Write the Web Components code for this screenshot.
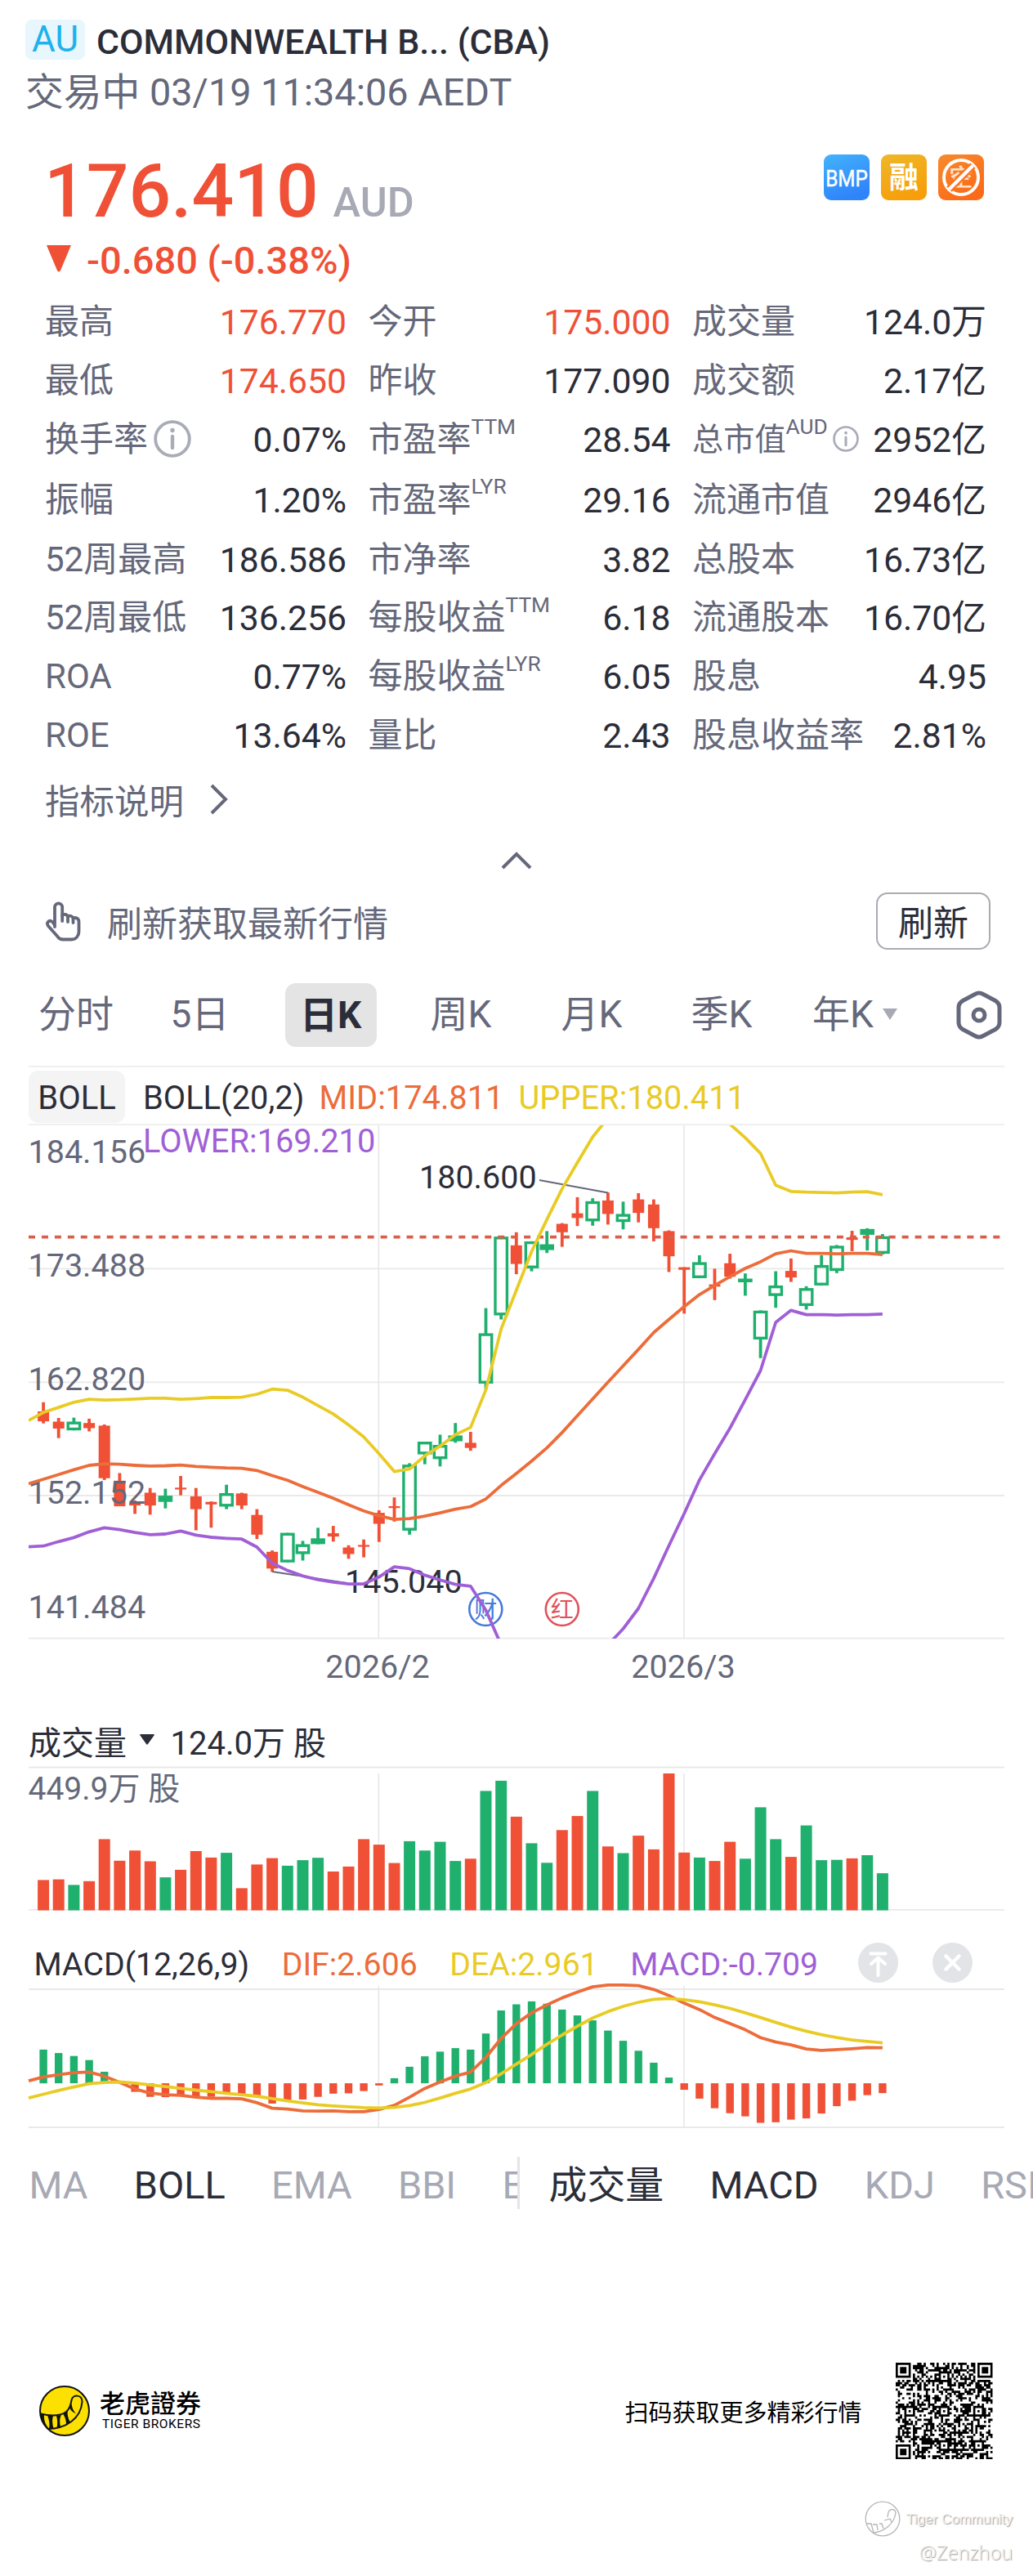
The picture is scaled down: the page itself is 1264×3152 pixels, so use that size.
<!DOCTYPE html>
<html lang="zh-CN">
<head>
<meta charset="utf-8">
<title>COMMONWEALTH B... (CBA)</title>
<style>
  html, body {
    margin: 0;
    background: #fff;
  }
  body {
    width: 1264px;
    height: 3152px;
    overflow: hidden;
    font-family: Roboto, "Noto Sans CJK SC", sans-serif;
    --ink: #2b2d38;
    --muted: #65687a;
    --faint: #a7a9b4;
    --line: #f0f0f1;
    --red: #ef5036;
    --green: #20b06e;
    --orange: #ec6c3a;
    --yellow: #e9cb25;
    --purple: #a05fd6;
    color: var(--ink);
  }
</style>
</head>
<body>
<stock-page></stock-page>

<script>
// Shared base: every element renders its own html() once into an open root
class BaseElement extends HTMLElement {
  constructor() {
    super();
    this.root = this.attachShadow({ mode: "open" });
  }
  connectedCallback() {
    const template = document.createElement("template");
    template.innerHTML = this.html();
    this.root.appendChild(template.content.cloneNode(true));
  }
}

class QuoteHeader extends BaseElement {
  html() {
    return `
      <style>
        :host { display: block; height: 162px; padding: 24px 31px 0; }
        .row { display: flex; }
        .market {
          width: 73px; height: 49px; line-height: 48px; border-radius: 8px;
          background: #e7f7fd; color: #1fb1ec; font-size: 44px; text-align: center;
        }
        .name { margin-left: 14px; font-size: 42.9px; line-height: 54px; font-weight: 500; white-space: nowrap; }
        .time { margin-top: 9px; font-size: 46.8px; line-height: 52px; color: var(--muted); white-space: nowrap; }
      </style>
      <div class="row">
        <div class="market"><slot name="market"></slot></div>
        <div class="name"><slot></slot></div>
      </div>
      <div class="time"><slot name="time"></slot></div>
    `;
  }
}
customElements.define("quote-header", QuoteHeader);

class PricePanel extends BaseElement {
  html() {
    return `
      <style>
        :host { display: block; height: 172px; padding: 0 60px 0 54px; color: var(--red); }
        .top { display: flex; justify-content: space-between; height: 106px; }
        .price { font-size: 91px; line-height: 97px; font-weight: 500; white-space: nowrap; }
        .unit { margin-left: 18px; font-size: 50.5px; color: var(--faint); }
        .badges { display: flex; gap: 14px; padding-top: 3px; }
        .badges svg { display: block; overflow: visible; }
        .change { display: flex; align-items: center; height: 52px; font-size: 47px; font-weight: 500; white-space: nowrap; }
        .change svg { margin: 0 19px 3px 3px; }
      </style>
      <div class="top">
        <div class="price">176.410<span class="unit">AUD</span></div>
        <div class="badges">
          <svg width="56" height="56" viewBox="0 0 56 56">
            <linearGradient id="b" x1="0" y1="0" x2=".4" y2="1"><stop offset="0" stop-color="#43b3fa"/><stop offset="1" stop-color="#3084fa"/></linearGradient>
            <rect width="56" height="56" rx="9" fill="url(#b)"/>
            <g transform="translate(28 38.500) scale(1 1.170)">
              <text text-anchor="middle" font-size="24.300" fill="#fff" stroke="#fff" stroke-width=".4">BMP</text>
            </g>
          </svg>
          <svg width="56" height="56" viewBox="0 0 56 56">
            <linearGradient id="y" x1="0" y1="0" x2=".4" y2="1"><stop offset="0" stop-color="#eeb728"/><stop offset="1" stop-color="#f79f0b"/></linearGradient>
            <rect width="56" height="56" rx="9" fill="url(#y)"/>
            <text x="28" y="41" text-anchor="middle" font-size="36" font-weight="700" fill="#fff">融</text>
          </svg>
          <svg width="56" height="56" viewBox="0 0 56 56">
            <linearGradient id="o" x1="0" y1="0" x2=".6" y2="1"><stop offset="0" stop-color="#f78a2c"/><stop offset="1" stop-color="#fb6a18"/></linearGradient>
            <rect width="56" height="56" rx="9" fill="url(#o)"/>
            <text x="28" y="38.500" text-anchor="middle" font-size="29" font-weight="500" fill="#ffe3cd">空</text>
            <circle cx="28" cy="28" r="21" fill="none" stroke="#fff" stroke-width="4"/>
            <path d="M13.500 42.500 42.500 13.500" stroke="#fb7420" stroke-width="9"/>
            <path d="M13.500 42.500 42.500 13.500" stroke="#fff" stroke-width="4.500"/>
          </svg>
        </div>
      </div>
      <div class="change">
        <svg width="30" height="33"><path d="M0 0H30L17 31Q15 34 13 31Z" fill="#ef5036"/></svg>
        <slot></slot>
      </div>
    `;
  }
}
customElements.define("price-panel", PricePanel);

const infoIcon = (size) => `
  <svg class="info" width="${size}" height="${size}" viewBox="0 0 46 46">
    <circle cx="23" cy="23" r="20.800" fill="none" stroke="#a9abb7" stroke-width="3.800"/>
    <circle cx="23" cy="12.500" r="2.700" fill="#a9abb7"/>
    <path d="M23 20V34" stroke="#a9abb7" stroke-width="4.400" stroke-linecap="round"/>
  </svg>`;

// <stat-cell label value sup? info? tone?>
class StatCell extends BaseElement {
  html() {
    const get = (name) => this.getAttribute(name) || "";
    const info = get("info");
    return `
      <style>
        :host { display: flex; justify-content: space-between; align-items: center; white-space: nowrap; line-height: 60px; }
        .label { display: flex; align-items: center; font-size: 42px; color: var(--muted); }
        .small { font-size: 38.2px; }
        .sup { font-size: 26.3px; line-height: 28px; margin-bottom: 33px; }
        .info { margin: 0 0 2px 7px; }
        .small .info { margin-left: 6px; }
        .value { font-size: 42.7px; color: var(--ink); }
        .down { color: var(--red); }
      </style>
      <div class="label ${info === "32" ? "small" : ""}">
        <span>${get("label")}</span>${get("sup") ? `<span class="sup">${get("sup")}</span>` : ""}${info ? infoIcon(info) : ""}
      </div>
      <div class="value ${get("tone")}">${get("value")}</div>
    `;
  }
}
customElements.define("stat-cell", StatCell);

const STATS = [
  ["最高", "176.770", "tone=down"], ["今开", "175.000", "tone=down"], ["成交量", "124.0万"],
  ["最低", "174.650", "tone=down"], ["昨收", "177.090"], ["成交额", "2.17亿"],
  ["换手率", "0.07%", "info=46"], ["市盈率", "28.54", "sup=TTM"], ["总市值", "2952亿", "sup=AUD info=32"],
  ["振幅", "1.20%"], ["市盈率", "29.16", "sup=LYR"], ["流通市值", "2946亿"],
  ["52周最高", "186.586"], ["市净率", "3.82"], ["总股本", "16.73亿"],
  ["52周最低", "136.256"], ["每股收益", "6.18", "sup=TTM"], ["流通股本", "16.70亿"],
  ["ROA", "0.77%"], ["每股收益", "6.05", "sup=LYR"], ["股息", "4.95"],
  ["ROE", "13.64%"], ["量比", "2.43"], ["股息收益率", "2.81%"],
];

class StatGrid extends BaseElement {
  html() {
    return `
      <style>
        :host { display: block; padding-left: 55px; }
        .grid {
          display: grid;
          grid-template-columns: 369px 370px 360px;
          grid-template-rows: 72px 72px 72px 75px 71px 72px 72px 72px;
          column-gap: 26.5px;
        }
        .more { display: flex; align-items: center; height: 88px; font-size: 42.5px; color: var(--muted); }
        .more span { margin-bottom: 5px; }
        .more svg { margin: 0 0 4px 31px; }
        .fold { display: flex; justify-content: center; align-items: center; height: 58px; margin-left: -55px; }
      </style>
      <div class="grid">
        ${STATS.map(([label, value, extra = ""]) => `<stat-cell label="${label}" value="${value}" ${extra}></stat-cell>`).join("")}
      </div>
      <div class="more"><span>指标说明</span>
        <svg width="24" height="38" fill="none" stroke="#65687a" stroke-width="4"><path d="M3 2 20 19 3 36"/></svg>
      </div>
      <div class="fold"><svg width="38" height="24" fill="none" stroke="#65687a" stroke-width="4"><path d="M2 21 19 4 36 21"/></svg></div>
    `;
  }
}
customElements.define("stat-grid", StatGrid);

class RefreshBar extends BaseElement {
  html() {
    return `
      <style>
        :host { display: flex; align-items: center; height: 70px; margin: 10px 52px 0 56px; font-size: 43px; color: var(--muted); }
        .tip { flex: 1; margin-left: 32px; }
        button {
          box-sizing: border-box; width: 140px; height: 70px; padding: 0 0 2px; font: inherit; color: var(--ink);
          background: #fff; border: 2px solid #abacb2; border-radius: 14px;
        }
      </style>
      <svg width="43" height="49" viewBox="0 0 43 49" fill="none" stroke="#65687a" stroke-width="3.800" stroke-linecap="round" stroke-linejoin="round">
        <path d="M11 31V7a4.600 4.600 0 0 1 9.200 0V17C22 15 26 15.500 27 18.500 29 16.800 32.500 17.500 33.500 20.500 37 19 40.500 21 40.500 25V37C40.500 42 37 46.500 32 46.500H21C18 46.500 16 45.500 14.500 43L3 30C0 25.500 5 21.500 8.500 25.500L11 29"/>
        <path d="M20.200 17V24M27 18.500V25M33.500 20.500V26"/>
      </svg>
      <div class="tip"><slot></slot></div>
      <button>刷新</button>
    `;
  }
}
customElements.define("refresh-bar", RefreshBar);

class PeriodTabs extends BaseElement {
  html() {
    return `
      <style>
        :host {
          display: grid; grid-template-columns: 142px 161px 159px 160px 160px 158px 168px 135px;
          place-items: center; height: 78px; margin: 40px 0 24px; padding-left: 22px; width: 1242px;
          font-size: 46px; line-height: 79px; color: var(--muted); white-space: nowrap;
        }
        .on { width: 112px; height: 78px; text-align: center; background: #e4e4e5; border-radius: 13px; color: var(--ink); font-weight: 700; }
        .caret { display: inline-block; margin: 0 0 7px 11px; vertical-align: middle; }
      </style>
      <div>分时</div><div>5日</div><div class="on">日K</div><div>周K</div><div>月K</div><div>季K</div>
      <div>年K<svg class="caret" width="18" height="14"><path d="M0 0H18L9 14Z" fill="#a7a9b4"/></svg></div>
      <svg width="56" height="60" viewBox="0 0 56 60" fill="none" stroke="#65687a" stroke-width="5">
        <path d="M23 4.500Q28 1.500 33 4.500L48 12.500Q53 15.500 53 21V39Q53 44.500 48 47.500L33 55.500Q28 58.500 23 55.500L8 47.500Q3 44.500 3 39V21Q3 15.500 8 12.500Z"/>
        <circle cx="28" cy="30" r="7"/>
      </svg>
    `;
  }
}
customElements.define("period-tabs", PeriodTabs);

// ---- chart data ----------------------------------------------------------
const COUNT = 56;
const FIRST_X = 53.06;
const STEP = 18.67;
const cx = (i) => FIRST_X + STEP * i;

// type, high, body top, body bottom, low   (r: down, h: up hollow, g: up solid)
const CANDLES = `
r 797 822 849 855|r 840 850 869 895|h 839 850 874 874|r 842 854 868 877|r 858 861 1005 1010|r 991 1012 1082 1082
r 1066 1073 1080 1103|r 1032 1045 1080 1105|g 1034 1053 1070 1088|r 999 1031 1036 1052|r 1032 1055 1090 1148|r 1069 1070 1077 1141
h 1023 1046 1083 1090|r 1045 1047 1080 1090|r 1090 1106 1160 1172|r 1203 1207 1253 1262|h 1155 1155 1236 1236|h 1177 1186 1213 1231
g 1141 1170 1186 1186|r 1136 1156 1165 1179|r 1189 1195 1213 1226|r 1173 1188 1193 1222|r 1093 1100 1130 1180|r 1058 1082 1087 1124
h 964 968 1149 1160|h 905 905 940 967|h 886 914 953 973|g 854 888 904 908|r 878 908 922 930|h 539 608 746 762
h 343 343 559 570|r 331 367 418 446|h 356 356 430 438|g 328 364 380 388|r 306 308 331 371|r 235 279 292 314
h 238 246 301 313|r 222 244 281 310|h 247 281 303 323|r 224 241 278 304|r 241 255 320 356|r 326 328 397 440
r 427 427 434 554|h 394 413 457 457|r 431 474 480 517|r 390 416 453 458|g 444 458 468 505|h 545 546 625 676
h 438 477 506 538|r 403 437 455 467|h 479 484 533 543|h 394 421 477 477|h 366 368 437 443|r 327 345 352 383
g 320 322 338 381|h 336 342 390 392`.trim().split(/[|\n]/).map((row) => {
  const [type, ...v] = row.split(" ");
  return [type, ...v.map(Number)];
});

// Each series starts with its value at the left edge of the plot
const UPPER = [847, 825, 811, 797, 789, 791, 790, 788, 786, 786, 789, 787, 784, 784, 783, 775, 761, 764, 783, 806, 829, 859, 892, 938, 987, 980, 944, 917, 886, 866, 763, 596, 490, 384, 296, 212, 140, 70, 18, -40, -70, -80, -75, -60, -30, 0, 35, 72, 115, 202, 219, 221, 222, 223, 221, 220, 228];
const MID = [1020, 1008, 995, 982, 970, 966, 967, 970, 972, 971, 969, 973, 975, 977, 978, 984, 998, 1011, 1028, 1044, 1060, 1078, 1095, 1108, 1118, 1116, 1109, 1100, 1090, 1083, 1062, 1025, 992, 958, 922, 880, 834, 788, 742, 697, 652, 606, 570, 535, 502, 477, 453, 430, 412, 390, 382, 389, 389, 390, 389, 389, 392];
const LOWER = [1193, 1191, 1179, 1168, 1152, 1141, 1146, 1154, 1160, 1158, 1150, 1161, 1167, 1170, 1172, 1194, 1238, 1258, 1273, 1283, 1290, 1295, 1295, 1276, 1248, 1253, 1271, 1284, 1296, 1301, 1367, 1462, 1560, 1640, 1680, 1680, 1620, 1540, 1462, 1418, 1362, 1280, 1190, 1102, 1010, 938, 868, 790, 710, 578, 545, 557, 557, 558, 557, 557, 555];
const VOLUME = [617, 615, 634, 621, 477, 551, 516, 553, 608, 582, 518, 540, 524, 645, 564, 542, 568, 549, 541, 588, 571, 477, 496, 559, 484, 516, 486, 552, 544, 312, 277, 400, 491, 558, 446, 398, 312, 502, 525, 465, 512, 252, 523, 540, 552, 486, 544, 368, 477, 538, 430, 549, 548, 543, 532, 594];
const HIST = [1198, 1210, 1220, 1234, 1274, 1313, 1343, 1360, 1361, 1358, 1360, 1360, 1345, 1352, 1358, 1383, 1371, 1369, 1360, 1349, 1348, 1340, 1321, 1296, 1257, 1221, 1205, 1193, 1198, 1143, 1064, 1043, 1033, 1041, 1061, 1081, 1098, 1133, 1168, 1202, 1243, 1294, 1336, 1366, 1399, 1416, 1427, 1449, 1447, 1438, 1434, 1417, 1392, 1373, 1354, 1347];
const DIF = [1305, 1292, 1284, 1277, 1275, 1289, 1310, 1333, 1347, 1353, 1355, 1361, 1365, 1365, 1367, 1380, 1399, 1402, 1408, 1409, 1408, 1411, 1411, 1403, 1389, 1361, 1331, 1309, 1289, 1275, 1225, 1160, 1109, 1072, 1045, 1021, 1001, 983, 977, 977, 979, 992, 1013, 1039, 1061, 1088, 1109, 1130, 1157, 1172, 1182, 1196, 1201, 1198, 1195, 1191, 1192];
const DEA = [1364, 1351, 1338, 1326, 1315, 1311, 1309, 1313, 1319, 1325, 1331, 1337, 1342, 1348, 1353, 1358, 1366, 1374, 1381, 1387, 1391, 1394, 1397, 1398, 1396, 1390, 1379, 1364, 1348, 1333, 1311, 1281, 1248, 1215, 1180, 1148, 1118, 1090, 1068, 1050, 1036, 1026, 1023, 1027, 1034, 1045, 1057, 1072, 1088, 1105, 1121, 1135, 1147, 1157, 1165, 1170, 1175];

const polyline = (values, toY, color) => {
  const points = values.map((v, i) => `${(i ? cx(i - 1) : 35).toFixed(1)},${toY(v).toFixed(1)}`).join(" ");
  return `<polyline points="${points}" fill="none" stroke="${color}" stroke-width="3.800" stroke-linejoin="round"/>`;
};
const bar = (x, w, y1, y2, color) =>
  `<rect x="${(x - w / 2).toFixed(1)}" y="${y1.toFixed(1)}" width="${w}" height="${Math.max(y2 - y1, 1).toFixed(1)}" fill="${color}"/>`;
const hline = (y) => `<path d="M35 ${y}H1229" stroke="#e9e9ea" stroke-width="1.800"/>`;
const vlines = (y1, y2) => [463.3, 837].map((x) => `<path d="M${x} ${y1}V${y2}" stroke="#e6e6e8" stroke-width="1.500"/>`).join("");

class PriceChart extends BaseElement {
  candle([type, high, top, bottom, low], i) {
    const y = this.toY;
    const x = cx(i);
    const color = type === "r" ? "var(--red)" : "var(--green)";
    if (type !== "h") {
      return bar(x, 3.8, y(high), y(low), color) + bar(x, type === "r" ? 14 : 17.6, y(top), y(bottom), color);
    }
    const box = `<rect x="${(x - 7.2).toFixed(1)}" y="${(y(top) + 1.7).toFixed(1)}" width="14.400" height="${(y(bottom) - y(top) - 3.4).toFixed(1)}" fill="none" stroke="${color}" stroke-width="3.400"/>`;
    return bar(x, 3.8, y(high), y(top) + 1, color) + bar(x, 3.8, y(bottom) - 1, y(low), color) + box;
  }
  html() {
    this.toY = (v) => v / 2.24 - 17;
    const y = this.toY;
    const axis = [["184.156", 45.5], ["173.488", 184.8], ["162.820", 324], ["152.152", 463], ["141.484", 602.6]];
    return `
      <style>
        :host { display: block; }
        .head {
          display: flex; align-items: flex-start; box-sizing: border-box; height: 73px;
          margin: 0 35px; border: solid var(--line); border-width: 2px 0; font-size: 40px;
        }
        .chip { width: 118px; height: 64px; margin-top: 4px; line-height: 67px; text-align: center; background: #f4f4f5; border-radius: 12px; }
        .legend {
          display: flex; flex-wrap: wrap; column-gap: 18px; width: 800px; margin: 11px 0 0 22px; line-height: 53px;
          font-size: 39.800px; white-space: nowrap; position: relative; z-index: 1;
        }
        svg { display: block; }
        text { font-size: 39.500px; fill: var(--ink); }
        .axis { fill: var(--muted); }
      </style>
      <div class="head">
        <div class="chip">BOLL</div>
        <div class="legend">
          <span>BOLL(20,2)</span>
          <span style="color: var(--orange)">MID:174.811</span>
          <span style="color: var(--yellow)">UPPER:180.411</span>
          <span style="color: var(--purple)">LOWER:169.210</span>
        </div>
      </div>
      <svg width="1264" height="700">
        <clipPath id="plot"><rect x="35" y="0" width="1194" height="628"/></clipPath>
        ${[175.4, 314.3, 453, 627.6].map(hline).join("")}
        ${vlines(0, 628)}
        ${CANDLES.map((c, i) => this.candle(c, i)).join("")}
        <path d="M35 136.600H1229" stroke="#d95f4b" stroke-width="3.600" stroke-dasharray="8 7.950"/>
        ${axis.map(([label, ty]) => `<text class="axis" x="34.500" y="${ty}">${label}</text>`).join("")}
        <path d="M660 67 744 82.500M333 546 424 560" stroke="#65687a" stroke-width="2"/>
        <text x="513" y="76.500">180.600</text>
        <text x="422" y="571.500">145.040</text>
        <g fill="none" stroke-width="2.600">
          <circle cx="594.300" cy="592" r="20" stroke="#4479dc"/>
          <circle cx="687.800" cy="592" r="20" stroke="#e0525a"/>
        </g>
        <text x="594.300" y="602.500" text-anchor="middle" style="font-size: 28px; fill: #4479dc">财</text>
        <text x="687.800" y="602.500" text-anchor="middle" style="font-size: 28px; fill: #e0525a">红</text>
        <g clip-path="url(#plot)">
          ${polyline(UPPER, y, "var(--yellow)")}
          ${polyline(MID, y, "var(--orange)")}
          ${polyline(LOWER, y, "var(--purple)")}
        </g>
        <text class="axis" x="462" y="675.500" text-anchor="middle">2026/2</text>
        <text class="axis" x="836" y="675.500" text-anchor="middle">2026/3</text>
      </svg>
    `;
  }
}
customElements.define("price-chart", PriceChart);

class VolumeChart extends BaseElement {
  html() {
    const y = (v) => v / 2.8 - 80;
    return `
      <style>
        :host { display: block; padding-top: 23px; }
        .head { display: flex; align-items: center; height: 60px; padding-left: 35px; font-size: 40px; white-space: nowrap; }
        .head svg { margin: 0 19.500px 3px 16px; }
        svg { display: block; }
        text { font-size: 39px; fill: var(--muted); }
      </style>
      <div class="head">成交量
        <svg width="18" height="13"><path d="M1 0H17Q18.500 0 17.500 1.500L10 12Q9 13.500 8 12L.5 1.500Q-.5 0 1 0Z" fill="#2b2d38"/></svg>
        124.0万 股
      </div>
      <svg width="1264" height="217">
        ${hline(2.5)}${hline(176.8)}${vlines(10, 177)}
        <text x="34.500" y="42">449.9万 股</text>
        ${VOLUME.map((v, i) => bar(cx(i), 14, y(v), 177.5, CANDLES[i][0] === "r" ? "var(--red)" : "var(--green)")).join("")}
      </svg>
    `;
  }
}
customElements.define("volume-chart", VolumeChart);

class MacdChart extends BaseElement {
  html() {
    const y = (v) => v / 2.8 - 350;
    const zero = y(1313.5);
    const hist = HIST.map((v, i) => {
      if (v === 1313) return "";
      return v < 1313 ? bar(cx(i), 9.4, y(v), zero, "var(--green)") : bar(cx(i), 9.4, zero, y(v), "var(--red)");
    });
    return `
      <style>
        :host { display: block; }
        .head { display: flex; align-items: center; height: 53px; padding-left: 41.500px; gap: 39.500px; font-size: 39.200px; white-space: nowrap; }
        .icons { display: flex; gap: 42px; margin: 0 0 5px 9px; }
        svg { display: block; overflow: visible; }
      </style>
      <div class="head">
        <span>MACD(12,26,9)</span>
        <span style="color: var(--orange)">DIF:2.606</span>
        <span style="color: var(--yellow)">DEA:2.961</span>
        <span style="color: var(--purple)">MACD:-0.709</span>
        <div class="icons">
          <svg width="49" height="49" fill="none" stroke="#fff" stroke-width="4" stroke-linecap="round" stroke-linejoin="round">
            <circle cx="24.500" cy="24.500" r="24.500" fill="#e3e4e8" stroke="none"/>
            <path d="M15.500 13.500H33.500M24.500 40V20M16 26 24.500 18.500 33 26"/>
          </svg>
          <svg width="49" height="49" fill="none" stroke="#fff" stroke-width="4.500" stroke-linecap="round">
            <circle cx="24.500" cy="24.500" r="24.500" fill="#e3e4e8" stroke="none"/>
            <path d="M16.500 16.500 32.500 32.500M32.500 16.500 16.500 32.500"/>
          </svg>
        </div>
      </div>
      <svg width="1264" height="178">
        ${hline(4)}${hline(173)}${vlines(0, 174)}
        ${hist.join("")}
        ${polyline(DIF, y, "var(--orange)")}
        ${polyline(DEA, y, "var(--yellow)")}
      </svg>
    `;
  }
}
customElements.define("macd-chart", MacdChart);

class IndicatorTabs extends BaseElement {
  html() {
    return `
      <style>
        :host { display: flex; height: 64px; margin-top: 31px; font-size: 46.900px; line-height: 70px; color: var(--faint); white-space: nowrap; }
        div { display: flex; gap: 56.300px; overflow: hidden; box-sizing: border-box; height: 64px; }
        .main { width: 635.500px; padding-left: 35.500px; border-right: 3px solid #e4e4e9; }
        .sub { flex: 1; padding-left: 36px; }
        b { font-weight: 400; color: var(--ink); }
      </style>
      <div class="main"><span>MA</span><b>BOLL</b><span>EMA</span><span>BBI</span><span>E</span></div>
      <div class="sub"><b>成交量</b><b>MACD</b><span>KDJ</span><span>RSI</span></div>
    `;
  }
}
customElements.define("indicator-tabs", IndicatorTabs);

class QrCode extends BaseElement {
  modules() {
    const size = 45;
    let seed = 20260319;
    const rand = () => (seed = (seed * 1103515245 + 12345) % 2147483648) / 2147483648;
    const grid = Array.from({ length: size }, () => Array.from({ length: size }, () => rand() < 0.5));
    // concentric square marker centred on (mx, my)
    const marker = (mx, my, reach, dark) => {
      for (let dy = -reach; dy <= reach; dy++) {
        for (let dx = -reach; dx <= reach; dx++) {
          const row = grid[my + dy];
          if (row && mx + dx >= 0 && mx + dx < size) row[mx + dx] = dark(Math.max(Math.abs(dx), Math.abs(dy)));
        }
      }
    };
    for (let i = 8; i < size - 8; i++) grid[6][i] = grid[i][6] = i % 2 === 0;
    [[3, 3], [41, 3], [3, 41]].forEach(([x, y]) => marker(x, y, 4, (d) => d < 2 || d === 3));
    [[22, 6], [6, 22], [22, 22], [38, 22], [22, 38], [38, 38]].forEach(([x, y]) => marker(x, y, 2, (d) => d !== 1));
    return grid;
  }
  html() {
    // neighbouring dark modules of a row are merged into one run, so no seams show
    const path = this.modules().map((row, y) => {
      let d = "";
      for (let x = 0; x < row.length; x++) {
        if (!row[x]) continue;
        const start = x;
        while (row[x + 1]) x++;
        d += `M${start} ${y}h${x - start + 1}v1.04h${start - x - 1}z`;
      }
      return d;
    }).join("");
    return `
      <style>
        :host { display: block; width: 118.500px; height: 118.500px; }
        svg { display: block; }
      </style>
      <svg width="118.500" height="118.500" viewBox="0 0 45 45"><path d="${path}"/></svg>
    `;
  }
}
customElements.define("qr-code", QrCode);

class PageFooter extends BaseElement {
  html() {
    return `
      <style>
        :host { display: block; padding-top: 187px; color: #000; }
        .row { display: flex; align-items: center; height: 120px; padding: 0 49.500px 0 48px; white-space: nowrap; }
        .brand { margin: -3px auto 0 12px; }
        .cn { font: 500 31px/34px "Noto Sans CJK TC", sans-serif; }
        .en { margin: 1px 0 0 3px; font-size: 15.500px; line-height: 18px; letter-spacing: .55px; }
        .scan { margin-right: 41.500px; font-size: 29px; }
        .mark { display: flex; flex-direction: column; align-items: flex-end; padding: 50px 25px 0 0; color: #f1f1f1; text-shadow: 1px 1px 1px #9c9c9c; }
        .mark div { display: flex; align-items: center; gap: 7px; height: 44px; font: 17.200px "Liberation Sans", sans-serif; }
        .mark p { margin: 2px 0 0; font: 300 23.500px/34px "Noto Sans", sans-serif; }
      </style>
      <div class="row">
        <svg width="62" height="62" viewBox="0 0 62 62">
          <clipPath id="disc"><circle cx="31" cy="31" r="30"/></clipPath>
          <circle cx="31" cy="31" r="30" fill="#fbe000" stroke="#111" stroke-width="2"/>
          <g clip-path="url(#disc)" stroke="#111" fill="none" stroke-width="2">
            <path d="M0 34Q22 40 33 32Q38 28 39.500 18C41 10 53 11 52.500 20C51 40 33 53 10 53"/>
            <g fill="#111" stroke="none">
              <path d="M0 33 6 36Q5 45 12 53L8 55-2 42Z"/>
              <path d="M10 36.500 17 37Q15 44 17.500 52.500L12 53.500Q13.500 44 10 36.500Z"/>
              <path d="M21 37 27 36Q24 41 26 50.500L21.500 52Q23 43 21 37Z"/>
              <path d="M29 34.500 35 30.500Q33.500 37 38 45L33 48Q33 40 29 34.500Z"/>
              <path d="M37 27 39.500 22.500Q40.500 30 45 34.500Q39 32 37 27Z"/>
            </g>
          </g>
        </svg>
        <div class="brand">
          <div class="cn">老虎證券</div>
          <div class="en">TIGER BROKERS</div>
        </div>
        <div class="scan">扫码获取更多精彩行情</div>
        <qr-code></qr-code>
      </div>
      <div class="mark">
        <div>
          <svg width="44" height="44" viewBox="0 0 44 44" fill="none" stroke="#b5b5b5" stroke-width="1.300">
            <circle cx="22" cy="22" r="20.800"/>
            <path d="M2 28 8 28 11 39C24 38 36 28 38 15C38 10 31 9 29 14L28 20M10 29 15 29 16 36M18 28 21 28 23 34M24 24 31 22 33 26"/>
          </svg>
          Tiger Community
        </div>
        <p>@Zenzhou</p>
      </div>
    `;
  }
}
customElements.define("page-footer", PageFooter);

class StockPage extends BaseElement {
  html() {
    return `
      <style>
        :host { display: block; width: 1264px; }
      </style>
      <quote-header>
        <span slot="market">AU</span>
        COMMONWEALTH B... (CBA)
        <span slot="time">交易中 03/19 11:34:06 AEDT</span>
      </quote-header>
      <price-panel>-0.680 (-0.38%)</price-panel>
      <stat-grid></stat-grid>
      <refresh-bar>刷新获取最新行情</refresh-bar>
      <period-tabs></period-tabs>
      <price-chart></price-chart>
      <volume-chart></volume-chart>
      <macd-chart></macd-chart>
      <indicator-tabs></indicator-tabs>
      <page-footer></page-footer>
    `;
  }
}
customElements.define("stock-page", StockPage);
</script>
</body>
</html>
